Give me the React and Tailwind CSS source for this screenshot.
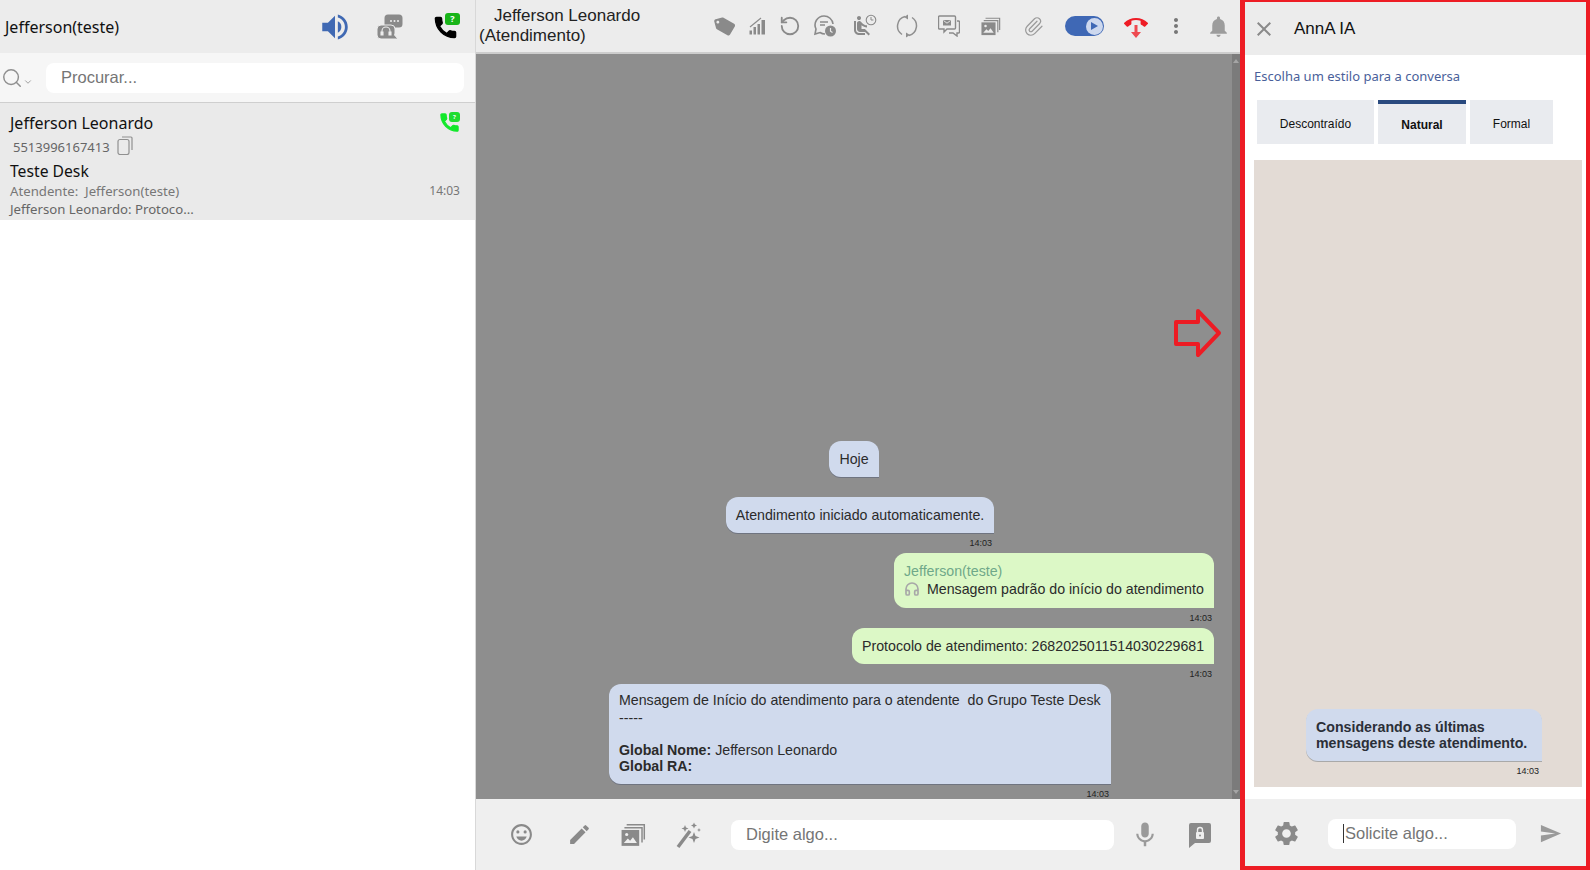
import React from "react";
import {
  MdCallEnd,
  MdClose,
  MdEdit,
  MdLocalOffer,
  MdMic,
  MdMoreVert,
  MdNotifications,
  MdOutlineEmojiEmotions,
  MdSend,
  MdSettings,
  MdVolumeUp,
  MdAirlineSeatReclineNormal,
} from "react-icons/md";
import { ChevronDown, Headphones, Paperclip, RotateCcw, Search } from "lucide-react";

const GRAY = "#8a8a8a";

function PhoneBadge({ phone, badge, small }) {
  const size = small ? 23 : 27;
  return (
    <span className={`relative inline-block ${small ? "h-[22px] w-[22px]" : "h-[28px] w-[28px]"}`}>
      <svg width={size} height={size} viewBox="0 0 24 24" fill={phone} stroke={phone} strokeWidth="1.200" className="absolute bottom-0 left-0">
        <path d="M6.620 10.790c1.440 2.830 3.760 5.140 6.590 6.590l2.200-2.200c.27-.27.67-.36 1.020-.24 1.120.37 2.330.57 3.570.57.55 0 1 .45 1 1V20c0 .55-.45 1-1 1-9.390 0-17-7.610-17-17 0-.55.45-1 1-1h3.500c.55 0 1 .45 1 1 0 1.250.2 2.450.57 3.570.11.35.03.74-.25 1.020l-2.200 2.200z" />
      </svg>
      <span
        className={`absolute right-0 top-0 flex items-center justify-center rounded-[3px] font-bold text-white ${small ? "h-[10px] w-[11px] text-[6px]" : "h-[12px] w-[15px] text-[9px]"}`}
        style={{ background: badge }}
      >
        ?
      </span>
    </span>
  );
}

function ChatsIcon() {
  return (
    <svg width="26" height="26" viewBox="0 0 26 26" fill={GRAY}>
      <path d="M11 0.500h11a3.500 3.500 0 0 1 3.500 3.500v6a3.500 3.500 0 0 1-3.500 3.500H11l-5 2 1.500-4V4A3.500 3.500 0 0 1 11 0.500z" />
      <circle cx="14" cy="7" r="1" fill="#ececec" />
      <circle cx="17.500" cy="7" r="1" fill="#ececec" />
      <circle cx="21" cy="7" r="1" fill="#ececec" />
      <path
        d="M4 11h10a4 4 0 0 1 4 4v4a4 4 0 0 1-.5 2l3.500 4H4a4 4 0 0 1-4-4v-6a4 4 0 0 1 4-4z"
        stroke="#ececec"
        strokeWidth="1"
      />
      <path d="M5 21v-4a4 4 0 0 1 8 0v4M4 18h2v3H4zM12 18h2v3h-2z" fill="none" stroke="#ececec" strokeWidth="1.100" />
    </svg>
  );
}

function SignalIcon() {
  return (
    <svg width="17" height="18" viewBox="0 0 17 18" fill={GRAY}>
      <rect x="0.500" y="13.500" width="2.500" height="4" />
      <rect x="4.500" y="10" width="2.500" height="7.500" />
      <rect x="8.500" y="7" width="2.500" height="10.500" />
      <rect x="12.500" y="3" width="3.500" height="14.500" />
      <path d="M1 10L12 1" stroke={GRAY} strokeWidth="1.100" fill="none" />
    </svg>
  );
}

function ChatClockIcon() {
  return (
    <svg width="24" height="24" viewBox="0 0 24 24" fill="none">
      <path d="M11 2a9 9 0 0 0-8 13l-1 5 5-1.500A9 9 0 0 0 12 20M20 10a9 9 0 0 0-9-8" stroke={GRAY} strokeWidth="1.600" />
      <path d="M7 8h8M7 11h5" stroke={GRAY} strokeWidth="1.600" />
      <circle cx="17.500" cy="17" r="5.500" fill={GRAY} />
      <path d="M17.500 14v3.200l2 1.200" stroke="#ececec" strokeWidth="1.200" />
    </svg>
  );
}

function SeatClockIcon() {
  return (
    <span className="relative inline-block h-[24px] w-[22px]">
      <MdAirlineSeatReclineNormal size={24} color={GRAY} className="absolute -left-[4px] bottom-0" />
      <svg width="12" height="12" viewBox="0 0 12 12" fill="none" className="absolute -right-[1px] top-0">
        <circle cx="6" cy="6" r="4.800" stroke={GRAY} strokeWidth="1.100" />
        <path d="M6 3v3h2.400" stroke={GRAY} strokeWidth="1" />
      </svg>
    </span>
  );
}

function SyncIcon() {
  return (
    <svg width="22" height="24" viewBox="0 0 22 24" fill="none" stroke="#909090" strokeWidth="1.500">
      <path d="M9 2.500A10 10 0 0 0 6 20.500" />
      <path d="M13 21.500A10 10 0 0 0 16 3.500" />
      <path d="M12 0.500v5l-4-2.500z" fill="#909090" stroke="none" />
      <path d="M10 18.500v5l4-2.500z" fill="#909090" stroke="none" />
    </svg>
  );
}

function MailChatIcon() {
  return (
    <svg width="22" height="22" viewBox="0 0 22 22" fill="none" stroke={GRAY} strokeWidth="1.400">
      <path d="M1.500 1h15a1 1 0 0 1 1 1v11a1 1 0 0 1-1 1H9l-3 3v-3H1.500a1 1 0 0 1-1-1V2a1 1 0 0 1 1-1z" />
      <path d="M19 6h1.500a1 1 0 0 1 1 1v10a1 1 0 0 1-1 1H19v3l-4-3h-4" />
      <rect x="5" y="5" width="8" height="5.500" fill={GRAY} stroke="none" />
      <path d="M5.500 5.500L9 8.200l3.500-2.700" stroke="#ececec" strokeWidth="0.900" />
    </svg>
  );
}

function PhotosIcon({ size = 22, bg = "#ececec" }) {
  return (
    <svg width={size} height={size} viewBox="0 0 22 22">
      <path d="M5 2.500h15.500v13" fill="none" stroke={GRAY} strokeWidth="1.300" />
      <path d="M3 5h15.500v13" fill="none" stroke={GRAY} strokeWidth="1.300" />
      <rect x="0.500" y="7" width="15.500" height="14" fill={GRAY} />
      <circle cx="5" cy="11" r="1.400" fill={bg} />
      <path d="M2.500 18.500l3.500-4 2 2 2.500-3 3.500 5z" fill={bg} />
    </svg>
  );
}

function HangupIcon() {
  return (
    <span className="relative inline-block h-[24px] w-[22px]">
      <MdCallEnd size={24} color="#ee1c25" className="absolute -left-[1px] -top-[3px]" />
      <svg width="12" height="13" viewBox="0 0 12 13" className="absolute bottom-0 left-[5px]" fill="#ee4a50">
        <path d="M4.500 0h3v7H11l-5 6-5-6h3.500z" />
      </svg>
    </span>
  );
}

function WandIcon() {
  return (
    <svg width="26" height="26" viewBox="0 0 26 26" fill={GRAY}>
      <path d="M2 25L14 9" stroke={GRAY} strokeWidth="3.400" />
      <path d="M18 10l1.500 4 4 1.500-4 1.500-1.500 4-1.500-4-4-1.500 4-1.500z" />
      <path d="M9 3l1 2.500 2.500 1-2.500 1-1 2.500-1-2.500-2.500-1 2.500-1z" />
      <path d="M18 0.500l.9 2.100 2.100.9-2.100.9-.9 2.100-.9-2.100-2.100-.9 2.100-.9z" />
      <path d="M23 6l.6 1.400 1.400.6-1.400.6-.6 1.400-.6-1.400-1.400-.6 1.400-.6z" />
    </svg>
  );
}

function LockChatIcon() {
  return (
    <svg width="24" height="26" viewBox="0 0 24 26">
      <path d="M3 1h18a2 2 0 0 1 2 2v16a2 2 0 0 1-2 2H7l-6 5V3a2 2 0 0 1 2-2z" fill={GRAY} />
      <rect x="8" y="10" width="8" height="7" rx="1" fill="#efefef" />
      <path d="M9.500 10V8a2.500 2.500 0 0 1 5 0v2" fill="none" stroke="#efefef" strokeWidth="1.400" />
      <circle cx="12" cy="13.500" r="1" fill={GRAY} />
    </svg>
  );
}

function CopyIcon() {
  return (
    <svg width="16" height="19" viewBox="0 0 16 19" fill="none" stroke="#909090" strokeWidth="1.200">
      <path d="M5 1h9a1 1 0 0 1 1 1v12" />
      <rect x="1" y="3.500" width="11" height="15" rx="2" />
    </svg>
  );
}

function Time({ pr = "pr-[2px]", h = "h-[20px]" }) {
  return (
    <div className={`${h} ${pr} pt-[5px] text-right text-[9px] leading-[10px] text-[#222]`}>14:03</div>
  );
}

function ContactList() {
  return (
    <div className="flex w-[476px] shrink-0 flex-col border-r border-[#d8d8d8] bg-white font-['Noto_Sans',sans-serif]">
      <div className="flex h-[53px] items-center bg-[#ececec]">
        <span className="w-[310px] pl-[5px] pt-[1px] text-[16px] text-[#111]">Jefferson(teste)</span>
        <span className="flex w-[50px] justify-center">
          <MdVolumeUp size={34} color="#4069b3" />
        </span>
        <span className="ml-[5px] flex w-[50px] justify-center">
          <ChatsIcon />
        </span>
        <span className="ml-[11px] flex w-[40px] justify-center">
          <PhoneBadge phone="#000" badge="#18b418" />
        </span>
      </div>
      <div className="flex h-[50px] items-center border-b border-[#cfcfcf] bg-[#f6f6f6]">
        <span className="flex w-[46px] items-center pl-[1px]">
          <Search size={22} color="#8f8f8f" strokeWidth={1.6} />
          <ChevronDown size={10} color="#8f8f8f" className="mt-[8px]" />
        </span>
        <div className="flex h-[30px] w-[418px] items-center rounded-lg bg-white pl-[15px] font-['Liberation_Sans',sans-serif] text-[16.5px] text-[#757575]">
          Procurar...
        </div>
      </div>
      <div className="relative h-[117px] bg-[#eaeaea] pl-[10px] text-[#111]">
        <div className="pt-[9px] text-[16px] leading-[22px]">Jefferson Leonardo</div>
        <div className="flex items-center pl-[3px] pt-[3px] text-[13px] leading-[20px] text-[#666]">
          5513996167413
          <span className="-mt-[3px] ml-[7px]"><CopyIcon /></span>
        </div>
        <div className="pt-[3px] text-[15.7px] leading-[22px]">Teste Desk</div>
        <div className="flex justify-between pr-[15px] text-[13.2px] leading-[18px] text-[#777]">
          <span>Atendente:&nbsp; Jefferson(teste)</span>
          <span className="text-[12px]">14:03</span>
        </div>
        <div className="text-[13.2px] leading-[18px] text-[#666]">Jefferson Leonardo: Protoco...</div>
        <span className="absolute right-[15px] top-[9px]">
          <PhoneBadge phone="#11e82a" badge="#1fdc2f" small />
        </span>
      </div>
    </div>
  );
}

function ChatHeader() {
  return (
    <div className="flex h-[54px] items-center border-b-2 border-[#cdcdcd] bg-[#ececec]">
      <div className="w-[231px] pl-[3px] text-[17px] leading-[20px] text-[#222] indent-[15px]">
        Jefferson Leonardo
        <br />
        (Atendimento)
      </div>
      <span className="flex w-[34px] justify-center pl-[2px]"><MdLocalOffer size={23} color={GRAY} className="-rotate-[15deg]" /></span>
      <span className="flex w-[33px] justify-center"><SignalIcon /></span>
      <span className="flex w-[32px] justify-center"><RotateCcw size={22} color={GRAY} strokeWidth={2} /></span>
      <span className="flex w-[38px] justify-center"><ChatClockIcon /></span>
      <span className="flex w-[42px] justify-center"><SeatClockIcon /></span>
      <span className="flex w-[42px] justify-center"><SyncIcon /></span>
      <span className="flex w-[42px] justify-center"><MailChatIcon /></span>
      <span className="flex w-[42px] justify-center"><PhotosIcon size={20} /></span>
      <span className="flex w-[42px] justify-center"><Paperclip size={21} color="#9a9a9a" strokeWidth={1.4} /></span>
      <span className="flex w-[61px] justify-center">
        <span className="flex h-[20px] w-[39px] items-center justify-end rounded-full bg-[#3f68b5] pr-[1px]">
          <span className="flex h-[17px] w-[17px] items-center justify-center rounded-full bg-[#cdd8ee]">
            <svg width="7" height="8" viewBox="0 0 7 8" fill="#3f68b5"><path d="M0 0l7 4-7 4z" /></svg>
          </span>
        </span>
      </span>
      <span className="flex w-[41px] justify-center"><HangupIcon /></span>
      <span className="flex w-[40px] justify-center"><MdMoreVert size={24} color="#777" /></span>
      <span className="flex w-[44px] justify-center"><MdNotifications size={25} color="#9c9c9c" /></span>
    </div>
  );
}

function Messages() {
  const blue = "rounded-xl rounded-br-none bg-[#d0daed] text-[#2b2b2b] shadow-[0_1px_0_#6f7480]";
  const green = "rounded-xl rounded-br-none bg-[#dcf8c6] text-[#2b2b2b]";
  return (
    <div className="relative flex min-h-0 flex-1 bg-[#8e8e8e] font-['Liberation_Sans',sans-serif] text-[14.2px] leading-[16px]">
      <div className="flex flex-1 flex-col justify-end">
        <div className={`mb-[20px] ml-[353px] w-[50px] py-[10px] text-center ${blue}`}>Hoje</div>

        <div className="ml-[250px] w-[268px]">
          <div className={`whitespace-nowrap py-[10px] text-center ${blue}`}>Atendimento iniciado automaticamente.</div>
          <Time />
        </div>

        <div className="ml-[418px] w-[320px]">
          <div className={`px-[10px] pb-[11px] pt-[10px] ${green}`}>
            <div className="text-[#6fa889]">Jefferson(teste)</div>
            <div className="mt-[2px] flex items-center whitespace-nowrap">
              <Headphones size={16} color="#a8a8a8" strokeWidth={2.5} className="mr-[7px]" />
              Mensagem padrão do início do atendimento
            </div>
          </div>
          <Time />
        </div>

        <div className="ml-[376px] w-[362px]">
          <div className={`py-[10px] pl-[10px] ${green}`}>Protocolo de atendimento: 2682025011514030229681</div>
          <Time />
        </div>

        <div className="ml-[133px] w-[502px]">
          <div className={`px-[10px] pb-[10px] pt-[8px] ${blue}`}>
            <div className="mb-[2px]">Mensagem de Início do atendimento para o atendente&nbsp; do Grupo Teste Desk</div>
            <div>-----</div>
            <div className="h-[16px]" />
            <div><b>Global Nome:</b> Jefferson Leonardo</div>
            <div><b>Global RA:</b></div>
          </div>
          <Time h="h-[15px]" />
        </div>
      </div>

      <div className="flex w-[8px] shrink-0 flex-col justify-between bg-[#7b7b7b] text-[#a5a5a5]">
        <svg width="8" height="8" viewBox="0 0 8 8" fill="currentColor" className="mt-[4px]"><path d="M4 1l3 4H1z" /></svg>
        <svg width="8" height="8" viewBox="0 0 8 8" fill="currentColor" className="mb-[4px]"><path d="M4 7L1 3h6z" /></svg>
      </div>

      {/* seta vermelha por cima do chat */}
      <svg width="48" height="50" viewBox="0 0 48 50" className="absolute left-[698px] top-[254px]">
        <path d="M2 14h22V3l21 22-21 22V36H2z" fill="none" stroke="#ed1c24" strokeWidth="4" strokeLinejoin="round" />
      </svg>
    </div>
  );
}

function ChatFooter() {
  return (
    <div className="flex h-[71px] shrink-0 items-center bg-[#efefef]">
      <span className="flex w-[74px] justify-center pl-[16px]"><MdOutlineEmojiEmotions size={25} color={GRAY} /></span>
      <span className="flex w-[58px] justify-center"><MdEdit size={25} color={GRAY} /></span>
      <span className="flex w-[50px] justify-center"><PhotosIcon size={25} bg="#efefef" /></span>
      <span className="flex w-[62px] justify-center"><WandIcon /></span>
      <div className="ml-[11px] flex h-[30px] w-[383px] items-center rounded-lg bg-white pl-[15px] font-['Liberation_Sans',sans-serif] text-[16.5px] text-[#757575]">
        Digite algo...
      </div>
      <span className="flex w-[62px] justify-center"><MdMic size={30} color="#9a9a9a" /></span>
      <span className="flex w-[48px] justify-center"><LockChatIcon /></span>
    </div>
  );
}

function AnnaPanel() {
  return (
    <div className="flex w-[350px] shrink-0 flex-col border-b-4 border-l-[5px] border-r-4 border-t-2 border-[#ed1c24] bg-white font-['Liberation_Sans',sans-serif]">
      <div className="flex h-[53px] shrink-0 items-center bg-[#ececec]">
        <MdClose size={24} color={GRAY} className="ml-[7px]" />
        <span className="ml-[18px] text-[17px] text-[#111]">AnnA IA</span>
      </div>
      <div className="flex min-h-0 flex-1 flex-col pl-[9px] pr-[4px]">
        <div className="pt-[12px] font-['Noto_Sans',sans-serif] text-[13px] leading-[18px] text-[#4a5f9a]">
          Escolha um estilo para a conversa
        </div>
        <div className="mt-[15px] flex gap-[4px] pl-[3px] text-[12px] text-[#111]">
          <button className="h-[44px] w-[117px] bg-[#e9ebef] pt-[3px]">Descontraído</button>
          <button className="h-[44px] w-[88px] border-t-4 border-[#2a4a7f] bg-[#e9ebef] pt-[1px] font-bold">Natural</button>
          <button className="h-[44px] w-[83px] bg-[#e9ebef] pt-[3px]">Formal</button>
        </div>
        <div className="mb-[12px] mt-[16px] flex min-h-0 flex-1 flex-col items-end justify-end bg-[#e3dbd5] pr-[40px]">
          <div className="w-[236px]">
            <div className="rounded-xl rounded-br-none bg-[#d0daed] px-[10px] py-[10px] text-[14.2px] font-bold leading-[16px] text-[#2b2f38] shadow-[0_1px_0_#a9a9a9]">
              Considerando as últimas mensagens deste atendimento.
            </div>
            <Time h="h-[26px]" pr="pr-[3px]" />
          </div>
        </div>
      </div>
      <div className="flex h-[67px] shrink-0 items-center bg-[#efefef] pt-[2px]">
        <span className="flex w-[83px] justify-center"><MdSettings size={29} color={GRAY} /></span>
        <div className="flex h-[30px] w-[188px] items-center rounded-lg bg-white pl-[15px] text-[16.5px] text-[#757575]">
          <span className="mr-[1px] h-[19px] w-[1px] bg-[#333]" />
          Solicite algo...
        </div>
        <span className="flex w-[68px] justify-center"><MdSend size={23} color="#9a9a9a" /></span>
      </div>
    </div>
  );
}

export default function App() {
  return (
    <div className="flex h-[870px] w-[1590px] overflow-hidden bg-white">
      <ContactList />
      <div className="flex w-[764px] shrink-0 flex-col font-['Liberation_Sans',sans-serif]">
        <ChatHeader />
        <Messages />
        <ChatFooter />
      </div>
      <AnnaPanel />
    </div>
  );
}
